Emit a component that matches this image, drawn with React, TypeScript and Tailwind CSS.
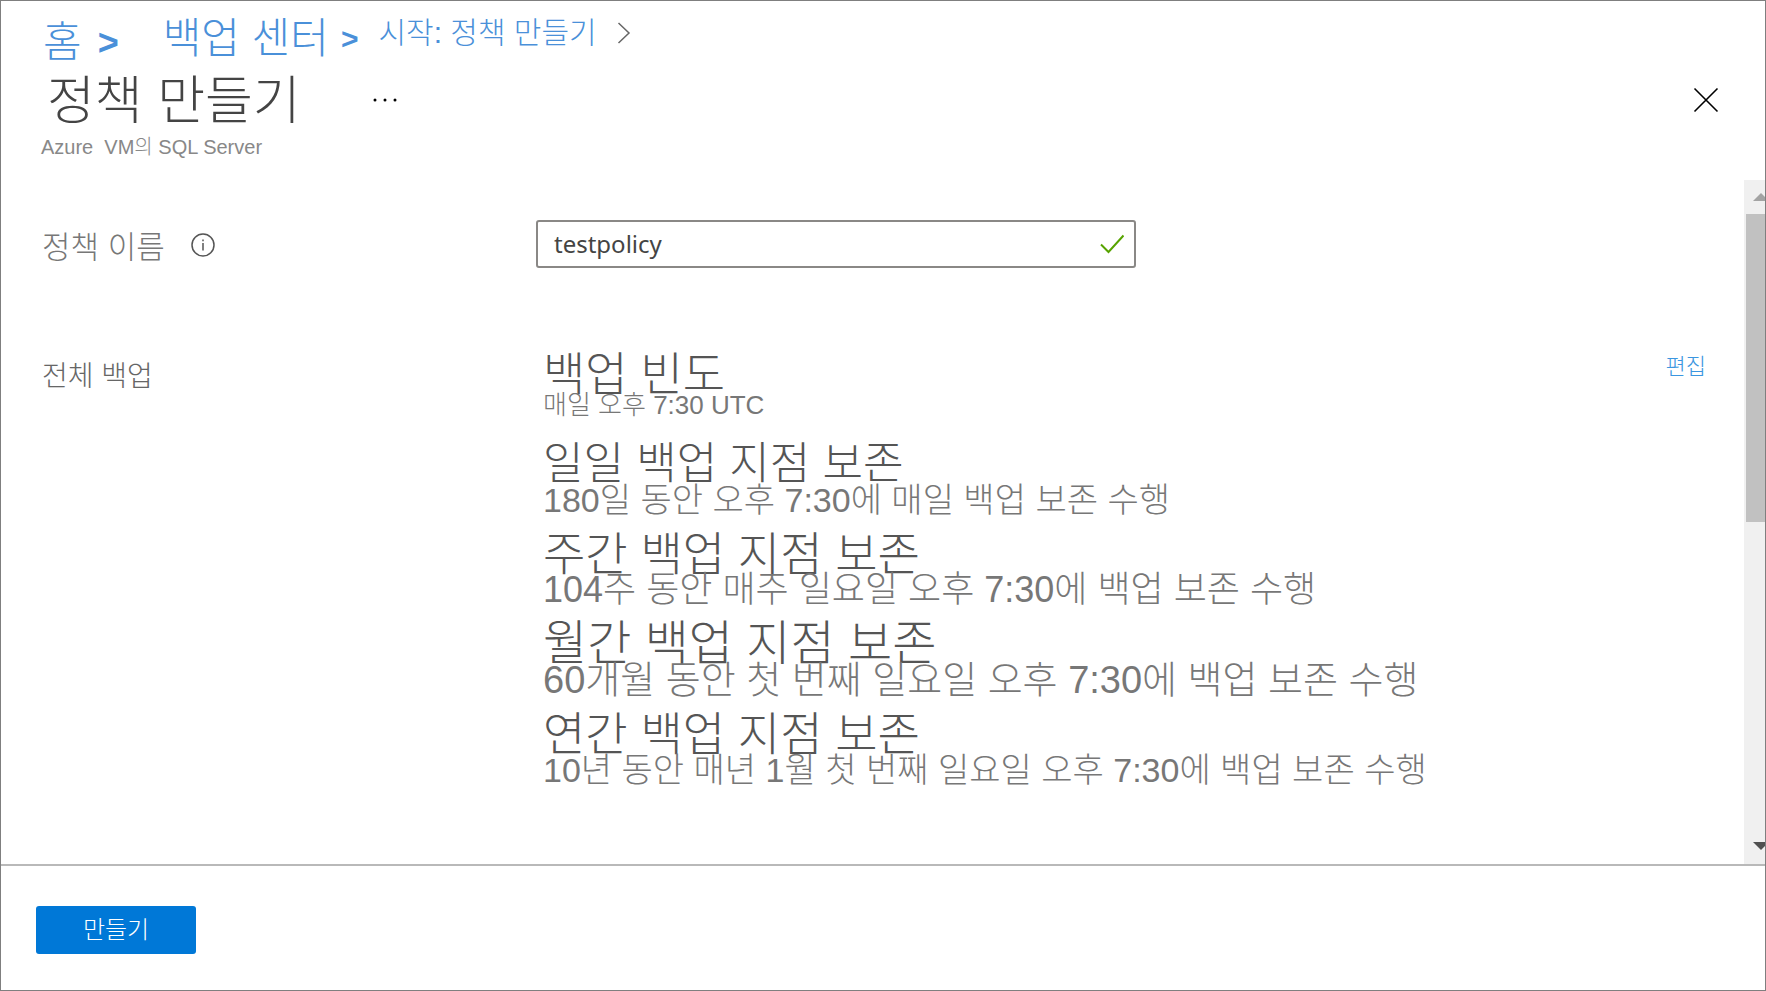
import { useState } from "react";

type Schedule = {
  title: string;
  detail: string;
  titleSize: string;
  detailSize: string;
};

const schedules: Schedule[] = [
  {
    title: "백업 빈도",
    detail: "매일 오후 7:30 UTC",
    titleSize: "text-[46px]",
    detailSize: "pb-2.5 text-[26px]/[22px]",
  },
  {
    title: "일일 백업 지점 보존",
    detail: "180일 동안 오후 7:30에 매일 백업 보존 수행",
    titleSize: "text-[44px]",
    detailSize: "text-[34px]/[32px]",
  },
  {
    title: "주간 백업 지점 보존",
    detail: "104주 동안 매주 일요일 오후 7:30에 백업 보존 수행",
    titleSize: "text-[46px]",
    detailSize: "text-[36px]/[32px]",
  },
  {
    title: "월간 백업 지점 보존",
    detail: "60개월 동안 첫 번째 일요일 오후 7:30에 백업 보존 수행",
    titleSize: "text-[48px]",
    detailSize: "text-[38px]/[32px]",
  },
  {
    title: "연간 백업 지점 보존",
    detail: "10년 동안 매년 1월 첫 번째 일요일 오후 7:30에 백업 보존 수행",
    titleSize: "text-[46px]",
    detailSize: "text-[34px]/[32px]",
  },
];

function Breadcrumb() {
  return (
    <nav aria-label="breadcrumb" className="flex h-[60px] items-start pt-2.5 pl-0.5 text-[#4a90d9]">
      <a href="#home" className="flex items-center gap-4 pt-2.5 text-[42px]/[44px]">
        홈 <span className="text-4xl font-bold">&gt;</span>
      </a>
      <a href="#backup-center" className="ml-11 flex items-center gap-3 pt-1.5 text-[42px]/[44px]">
        백업 센터 <span className="text-3xl font-bold">&gt;</span>
      </a>
      <a href="#start" className="ml-5 pt-1 text-3xl/[36px]">
        시작: 정책 만들기
      </a>
      <svg className="mt-2.5 ml-5 h-6 w-3.5 text-[#666]" viewBox="0 0 14 24" fill="none" stroke="currentColor" strokeWidth="1.5">
        <path d="M1.5 2l10.5 10L1.5 22" />
      </svg>
    </nav>
  );
}

function ScrollRail() {
  return (
    <div className="flex w-[21px] shrink-0 flex-col overflow-hidden bg-[#f0f0f0] pl-0.5">
      <div className="flex h-[34px] shrink-0 items-center pl-[7px]">
        <svg className="h-2 w-4 shrink-0" viewBox="0 0 16 8" fill="#a3a3a3">
          <path d="M0 8L8 0l8 8z" />
        </svg>
      </div>
      <div className="h-[45%] bg-[#c1c1c1]" />
      <div className="mt-auto flex h-9 shrink-0 items-center pl-[7px]">
        <svg className="h-2 w-4 shrink-0" viewBox="0 0 16 8" fill="#505050">
          <path d="M0 0h16L8 8z" />
        </svg>
      </div>
    </div>
  );
}

export default function App() {
  const [name, setName] = useState("testpolicy");

  return (
    <div className="flex min-h-screen flex-col border border-[#7f7f7f] bg-white font-['Liberation_Sans','Noto_Sans_CJK_KR',sans-serif] font-light text-[#555]">
      <header className="h-[179px] pr-[46px] pl-10">
        <Breadcrumb />
        <div className="flex h-[72px] items-center pt-1.5">
          <h1 className="pt-0.5 pl-1.5 text-[52px]/[60px] text-[#444]">정책 만들기</h1>
          <button aria-label="더 보기" className="ml-[72px] text-black">
            <svg className="h-1 w-6" viewBox="0 0 24 4" fill="currentColor">
              <circle cx="2" cy="2" r="1.5" />
              <circle cx="12" cy="2" r="1.5" />
              <circle cx="22" cy="2" r="1.5" />
            </svg>
          </button>
          <button aria-label="닫기" className="ml-auto text-black">
            <svg className="h-[26px] w-[26px]" viewBox="0 0 26 26" fill="none" stroke="currentColor" strokeWidth="1.6">
              <path d="M1.5 1.5l23 23M24.5 1.5l-23 23" />
            </svg>
          </button>
        </div>
        <p className="text-xl/[28px] text-[#888]">Azure&nbsp; VM의 SQL Server</p>
      </header>

      <div className="flex flex-1">
        <main className="flex-1 pr-[38px] pl-[41px]">
          <div className="grid grid-cols-[494px_1fr] items-center pt-10">
            <div className="flex items-center gap-[26px]">
              <label htmlFor="policy-name" className="mt-2 text-[31px]/[40px] text-[#777]">
                정책 이름
              </label>
              <svg className="mt-0.5 h-6 w-6" viewBox="0 0 24 24" fill="none" stroke="#555" strokeWidth="1.5">
                <circle cx="12" cy="12" r="11" />
                <path d="M12 10v7.5M12 6.5v1.8" />
              </svg>
            </div>
            <div className="flex h-12 w-full max-w-[600px] items-center rounded-[3px] border-2 border-[#8a8886] pr-2.5 pl-4">
              <input
                id="policy-name"
                value={name}
                onChange={(e) => setName(e.target.value)}
                className="min-w-0 flex-1 font-['Noto_Sans',sans-serif] text-2xl font-normal text-[#444] outline-none"
              />
              <svg className="h-5 w-6" viewBox="0 0 24 20" fill="none" stroke="#57a300" strokeWidth="2">
                <path d="M1 10.5l7.5 7.5L23.5 1.5" />
              </svg>
            </div>
          </div>

          <section className="grid grid-cols-[501px_1fr_auto] pt-[87px]">
            <h2 className="pt-1 text-[28px]/[36px] text-[#666]">전체 백업</h2>
            <div className="flex flex-col gap-5 pt-px">
              {schedules.map((s) => (
                <div key={s.title}>
                  <h3 className={`mb-0.5 leading-9 whitespace-nowrap ${s.titleSize}`}>{s.title}</h3>
                  <p className={`whitespace-nowrap text-[#777] ${s.detailSize}`}>{s.detail}</p>
                </div>
              ))}
            </div>
            <a href="#edit" className="self-start text-[22px]/[24px] text-[#3b96e0]">
              편집
            </a>
          </section>
        </main>
        <ScrollRail />
      </div>

      <footer className="border-t-2 border-[#b9b9b9] px-[35px] py-10 pb-9">
        <button className="h-12 w-40 rounded-[3px] bg-[#0078d7] text-2xl text-white">만들기</button>
      </footer>
    </div>
  );
}
